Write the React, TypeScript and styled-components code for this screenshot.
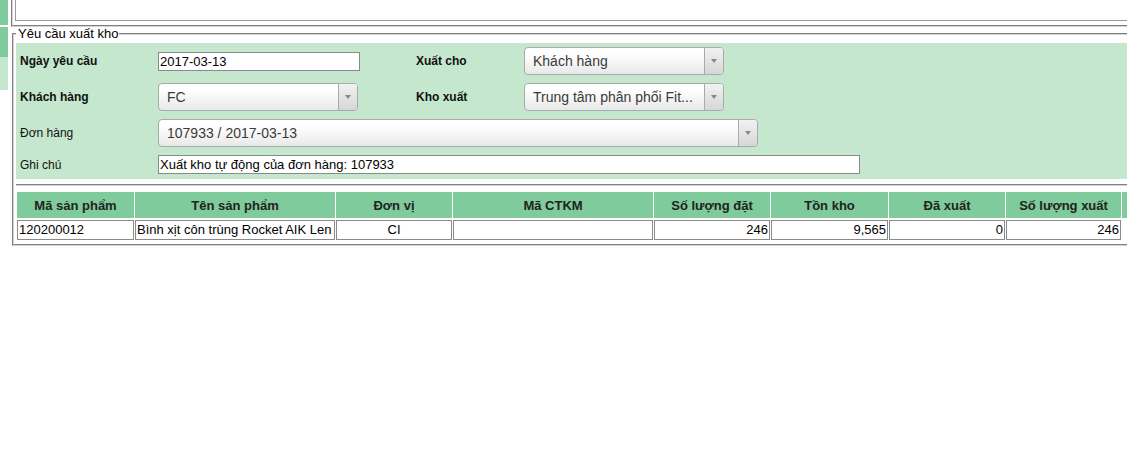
import React from 'react';
import styled, { createGlobalStyle } from 'styled-components';

const GlobalStyle = createGlobalStyle`
  html, body {
    margin: 0;
    padding: 0;
    background: #fff;
    overflow: hidden;
  }
  body {
    font-family: 'Liberation Sans', Arial, sans-serif;
    color: #000;
  }
`;

const GREEN = '#7fcb9c';
const LIGHT_GREEN = '#c5e7cd';
const GROOVE = '2px groove #d4d4d4';

const Page = styled.div`
  display: flex;
  align-items: flex-start;
  width: 1170px;
`;

const Sidebar = styled.div`
  width: 8px;
  flex-shrink: 0;
  display: flex;
  flex-direction: column;
`;

const SideItem = styled.div<{ $h: number; $light?: boolean; $gap?: number }>`
  height: ${(p) => p.$h}px;
  margin-bottom: ${(p) => p.$gap || 0}px;
  background: ${(p) => (p.$light ? LIGHT_GREEN : GREEN)};
`;

const Main = styled.div`
  flex: 1;
  margin-left: 3px;
  min-width: 0;
`;

const TopBox = styled.div`
  border-left: ${GROOVE};
  border-bottom: ${GROOVE};
  padding: 0 0 4px 2px;
`;

const TopInner = styled.div`
  height: 20px;
  border-left: 1px solid #999;
  border-bottom: 1px solid #999;
  background: #fff;
`;

const Fieldset = styled.fieldset`
  margin: 0 0 0 1px;
  padding: 2px 0 4px 2px;
  border: ${GROOVE};
  min-width: 0;
`;

const Legend = styled.legend`
  padding: 0 1px 0 2px;
  margin-left: 0;
  font-size: 13px;
  line-height: 14px;
`;

const Panel = styled.div`
  background: ${LIGHT_GREEN};
  padding: 4px 0 5px 4px;
  display: flex;
  flex-direction: column;
  gap: 8px;
`;

const Row = styled.div`
  display: flex;
  align-items: center;
`;

const Label = styled.div<{ $bold?: boolean; $w: number }>`
  width: ${(p) => p.$w}px;
  flex-shrink: 0;
  font-size: 12px;
  font-weight: ${(p) => (p.$bold ? 'bold' : 'normal')};
  color: #111;
`;

const Field = styled.div<{ $w: number }>`
  width: ${(p) => p.$w}px;
  flex-shrink: 0;
  display: flex;
  align-items: center;
`;

const TextInput = styled.input<{ $w: number }>`
  box-sizing: border-box;
  width: ${(p) => p.$w}px;
  height: 19px;
  margin: 0;
  padding: 0 1px;
  border: 1px solid #8a8a8a;
  background: #fff;
  font-family: 'Liberation Sans', Arial, sans-serif;
  font-size: 13px;
  color: #000;
  outline: none;
`;

const SelectBox = styled.div<{ $w: number }>`
  box-sizing: border-box;
  width: ${(p) => p.$w}px;
  height: 28px;
  display: flex;
  align-items: stretch;
  border: 1px solid #aaa;
  border-radius: 4px;
  background: linear-gradient(#ffffff 20%, #f6f6f6 55%, #e8e8e8);
`;

const SelectText = styled.div`
  flex: 1;
  min-width: 0;
  padding-left: 8px;
  display: flex;
  align-items: center;
  font-size: 14px;
  color: #3a3a3a;
  white-space: nowrap;
  overflow: hidden;
`;

const SelectArrow = styled.div`
  width: 18px;
  flex-shrink: 0;
  border-left: 1px solid #aaa;
  border-radius: 0 3px 3px 0;
  background: linear-gradient(#f2f2f2, #d6d6d6);
  display: flex;
  align-items: center;
  justify-content: center;

  &::after {
    content: '';
    border-left: 3px solid transparent;
    border-right: 3px solid transparent;
    border-top: 4px solid #888;
  }
`;

const TableWrap = styled.div`
  margin-top: 5px;
  border-top: ${GROOVE};
  padding: 6px 0 0 1px;
`;

const Grid = styled.div`
  display: grid;
  grid-template-columns: 117px 200px 116px 200px 116px 117px 116px 115px 100px;
  column-gap: 1px;
  row-gap: 2px;
`;

const HeadCell = styled.div`
  height: 26px;
  background: ${GREEN};
  display: flex;
  align-items: center;
  justify-content: center;
  font-size: 13px;
  font-weight: bold;
  color: #222;
  white-space: nowrap;
  overflow: hidden;
`;

const DataCell = styled.div<{ $align?: 'left' | 'center' | 'right'; $blank?: boolean }>`
  box-sizing: border-box;
  height: 20px;
  border: ${(p) => (p.$blank ? 'none' : '1px solid #8a8a8a')};
  padding: 0 1px;
  font-size: 13px;
  line-height: 18px;
  text-align: ${(p) => p.$align || 'left'};
  white-space: nowrap;
  overflow: hidden;
  color: #000;
`;

const Select = ({ w, text }: { w: number; text: string }) => (
  <SelectBox $w={w}>
    <SelectText>{text}</SelectText>
    <SelectArrow />
  </SelectBox>
);

const headers = [
  'Mã sản phẩm',
  'Tên sản phẩm',
  'Đơn vị',
  'Mã CTKM',
  'Số lượng đặt',
  'Tồn kho',
  'Đã xuất',
  'Số lượng xuất',
  '',
];

const row: { text: string; align?: 'left' | 'center' | 'right'; blank?: boolean }[] = [
  { text: '120200012' },
  { text: 'Bình xịt côn trùng Rocket AIK Len' },
  { text: 'CI', align: 'center' },
  { text: '' },
  { text: '246', align: 'right' },
  { text: '9,565', align: 'right' },
  { text: '0', align: 'right' },
  { text: '246', align: 'right' },
  { text: '', blank: true },
];

export default function App() {
  return (
    <Page>
      <GlobalStyle />
      <Sidebar>
        <SideItem $h={25} $gap={2} />
        <SideItem $h={30} />
        <SideItem $h={33} $light />
      </Sidebar>
      <Main>
        <TopBox>
          <TopInner />
        </TopBox>
        <Fieldset>
          <Legend>Yêu cầu xuất kho</Legend>
          <Panel>
            <Row>
              <Label $bold $w={138}>Ngày yêu cầu</Label>
              <Field $w={258}>
                <TextInput $w={202} value="2017-03-13" readOnly />
              </Field>
              <Label $bold $w={108}>Xuất cho</Label>
              <Field $w={200}>
                <Select w={200} text="Khách hàng" />
              </Field>
            </Row>
            <Row>
              <Label $bold $w={138}>Khách hàng</Label>
              <Field $w={258}>
                <Select w={200} text="FC" />
              </Field>
              <Label $bold $w={108}>Kho xuất</Label>
              <Field $w={200}>
                <Select w={200} text="Trung tâm phân phối Fit..." />
              </Field>
            </Row>
            <Row>
              <Label $w={138}>Đơn hàng</Label>
              <Field $w={600}>
                <Select w={600} text="107933 / 2017-03-13" />
              </Field>
            </Row>
            <Row>
              <Label $w={138}>Ghi chú</Label>
              <Field $w={702}>
                <TextInput $w={702} value="Xuất kho tự động của đơn hàng: 107933" readOnly />
              </Field>
            </Row>
          </Panel>
          <TableWrap>
            <Grid>
              {headers.map((h, i) => (
                <HeadCell key={`h${i}`}>{h}</HeadCell>
              ))}
              {row.map((c, i) => (
                <DataCell key={`c${i}`} $align={c.align} $blank={c.blank}>
                  {c.text}
                </DataCell>
              ))}
            </Grid>
          </TableWrap>
        </Fieldset>
      </Main>
    </Page>
  );
}
